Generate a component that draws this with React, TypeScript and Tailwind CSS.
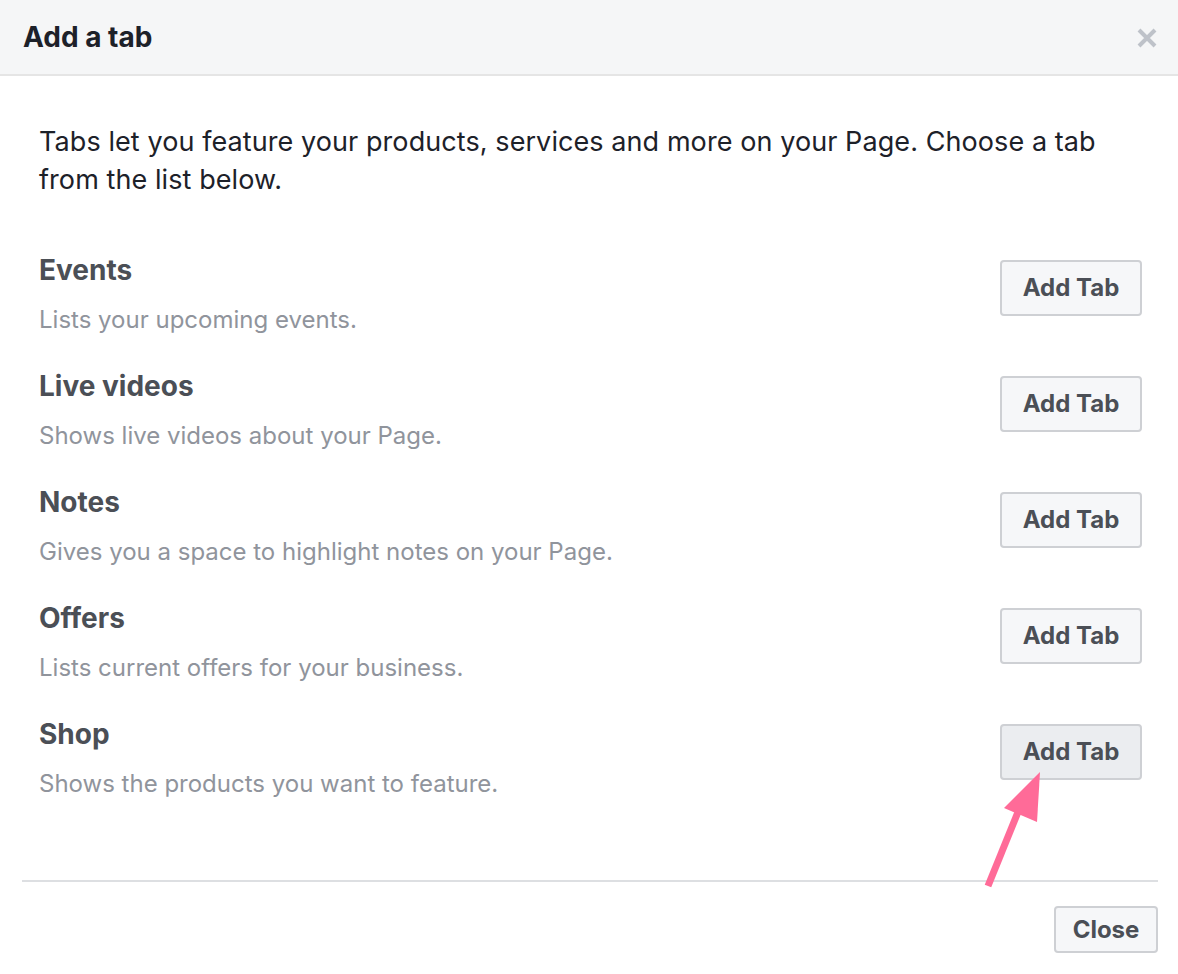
const tabs = [
  { name: 'Events', desc: 'Lists your upcoming events.' },
  { name: 'Live videos', desc: 'Shows live videos about your Page.' },
  { name: 'Notes', desc: 'Gives you a space to highlight notes on your Page.' },
  { name: 'Offers', desc: 'Lists current offers for your business.' },
  { name: 'Shop', desc: 'Shows the products you want to feature.', active: true },
];

function CloseIcon() {
  return (
    <svg width="20" height="20" viewBox="0 0 20 20" className="text-[#bec2c9]">
      <path d="M2 2 L18 18 M18 2 L2 18" stroke="currentColor" strokeWidth="4" strokeLinecap="butt" />
    </svg>
  );
}

export default function App() {
  return (
    <div className="relative min-h-screen w-[1178px] bg-white font-['Inter','Liberation_Sans',sans-serif] antialiased">
      <header className="h-[76px] bg-[#f5f6f7] border-b-2 border-[#e5e5e5] pl-[23px] pr-[21px] flex items-center justify-between">
        <h1 className="text-[28px] font-bold text-[#1d2129]">Add a tab</h1>
        <button className="mt-[1px]">
          <CloseIcon />
        </button>
      </header>

      <main className="pl-[39px] pr-[36px] pt-[47px]">
        <p className="text-[27px] leading-[38px] tracking-[0.08px] text-[#1d2129]">
          Tabs let you feature your products, services and more on your Page. Choose a tab from the list below.
        </p>

        <div className="mt-[56px] flex flex-col gap-[36px]">
          {tabs.map((tab) => (
            <div key={tab.name} className="flex items-start justify-between">
              <div className="flex flex-col gap-[20px]">
                <div className="text-[28px] leading-[30px] font-bold text-[#4b4f56]">{tab.name}</div>
                <div className="text-[24px] leading-[30px] text-[#90949c]">{tab.desc}</div>
              </div>
              <button
                className={`mt-[5px] h-[56px] w-[142px] rounded-[4px] border-2 border-[#ced0d4] text-[24px] font-bold text-[#4b4f56] ${
                  tab.active ? 'bg-[#ebedf0]' : 'bg-[#f6f7f9]'
                }`}
              >
                Add Tab
              </button>
            </div>
          ))}
        </div>
      </main>

      <footer className="mt-[81px] ml-[22px] mr-[20px] border-t-2 border-[#dddfe2] pt-[24px] flex justify-end">
        <button className="h-[47px] w-[104px] rounded-[4px] border-2 border-[#ced0d4] bg-[#f6f7f9] text-[24px] font-bold text-[#4b4f56]">
          Close
        </button>
      </footer>

      {/* annotation arrow pointing at the Shop button */}
      <svg className="absolute left-0 top-0 pointer-events-none" width="1178" height="974">
        <line x1="988" y1="886" x2="1018" y2="812" stroke="#ff6b98" strokeWidth="7" />
        <polygon points="1040,772 1004,808 1037,822" fill="#ff6b98" />
      </svg>
    </div>
  );
}
